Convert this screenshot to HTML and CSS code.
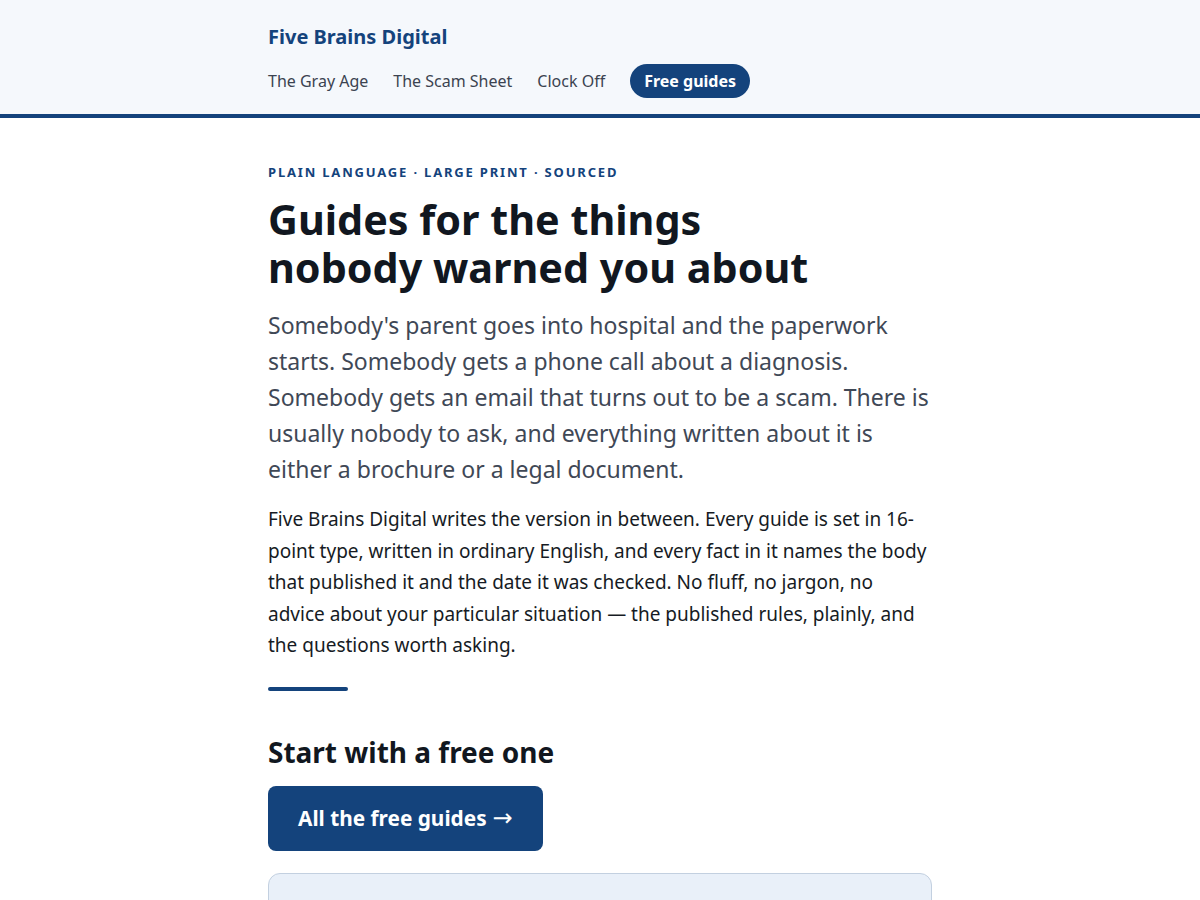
FILE: index.html
```html
<!DOCTYPE html>
<html lang="en">
<head>
<meta charset="utf-8">
<title>Five Brains Digital</title>
<link rel="stylesheet" href="styles.css">
</head>
<body>
<header class="site-header">
  <div class="wrap">
    <a class="brand" href="#">Five Brains Digital</a>
    <nav class="nav">
      <a href="#">The Gray Age</a>
      <a href="#">The Scam Sheet</a>
      <a href="#">Clock Off</a>
      <a class="pill" href="#">Free guides</a>
    </nav>
  </div>
</header>
<main class="wrap main">
  <p class="eyebrow">Plain language · Large print · Sourced</p>
  <h1 class="title">Guides for the things nobody warned you about</h1>
  <p class="lede">Somebody's parent goes into hospital and the paperwork starts. Somebody gets a phone call about a diagnosis. Somebody gets an email that turns out to be a scam. There is usually nobody to ask, and everything written about it is either a brochure or a legal document.</p>
  <p class="body">Five Brains Digital writes the version in between. Every guide is set in 16-point type, written in ordinary English, and every fact in it names the body that published it and the date it was checked. No fluff, no jargon, no advice about your particular situation — the published rules, plainly, and the questions worth asking.</p>
  <hr class="rule">
  <h2 class="section-title">Start with a free one</h2>
  <a class="button" href="#">All the free guides <span class="arrow">→</span></a>
  <div class="card"></div>
</main>
</body>
</html>
```
FILE: styles.css
```css
* { box-sizing: border-box; }
html, body { margin: 0; padding: 0; }
body {
  font-family: "Noto Sans", "Open Sans", sans-serif;
  background: #ffffff;
  color: #161b24;
}
a { text-decoration: none; }
.wrap {
  max-width: 664px;
  margin: 0 auto;
}
.site-header {
  background: #f5f8fc;
  border-bottom: 4px solid #14437c;
  padding: 23px 0 16px;
}
.brand {
  display: block;
  color: #14437c;
  font-weight: 700;
  font-size: 20px;
  line-height: 28px;
  margin-bottom: 13px;
}
.nav {
  display: flex;
  align-items: center;
  gap: 25px;
  height: 34px;
}
.nav a {
  color: #3b4350;
  font-size: 16px;
  line-height: 22px;
}
.nav a.pill {
  background: #14437c;
  color: #ffffff;
  font-weight: 700;
  padding: 6px 14px;
  border-radius: 17px;
}
.main {
  padding-top: 44px;
}
.eyebrow {
  margin: 0 0 13px;
  color: #14437c;
  font-size: 13px;
  line-height: 20px;
  font-weight: 700;
  text-transform: uppercase;
  letter-spacing: 0.14em;
}
.title {
  margin: 0 0 16px;
  font-size: 41.3px;
  line-height: 48px;
  font-weight: 700;
  color: #111720;
  max-width: 580px;
}
.lede {
  margin: 0 0 17px;
  font-size: 23px;
  line-height: 36px;
  color: #3f4856;
}
.body {
  margin: 0 0 25px;
  font-size: 19px;
  line-height: 31.5px;
  color: #161b24;
}
.rule {
  border: 0;
  margin: 0 0 43px;
  width: 80px;
  height: 4px;
  border-radius: 2px;
  background: #14437c;
}
.section-title {
  margin: 0 0 16px;
  font-size: 28px;
  line-height: 36px;
  font-weight: 700;
  color: #111720;
}
.button {
  display: inline-flex;
  align-items: center;
  gap: 6px;
  height: 65px;
  padding: 0 30px;
  background: #14437c;
  color: #ffffff;
  font-size: 20.8px;
  font-weight: 700;
  border-radius: 8px;
}
.arrow {
  font-family: "DejaVu Sans", sans-serif;
  font-weight: 400;
  font-size: 24px;
  line-height: 1;
}
.card {
  margin-top: 22px;
  height: 200px;
  background: #e9f0f9;
  border: 1px solid #c3d0e0;
  border-radius: 12px;
}
```
